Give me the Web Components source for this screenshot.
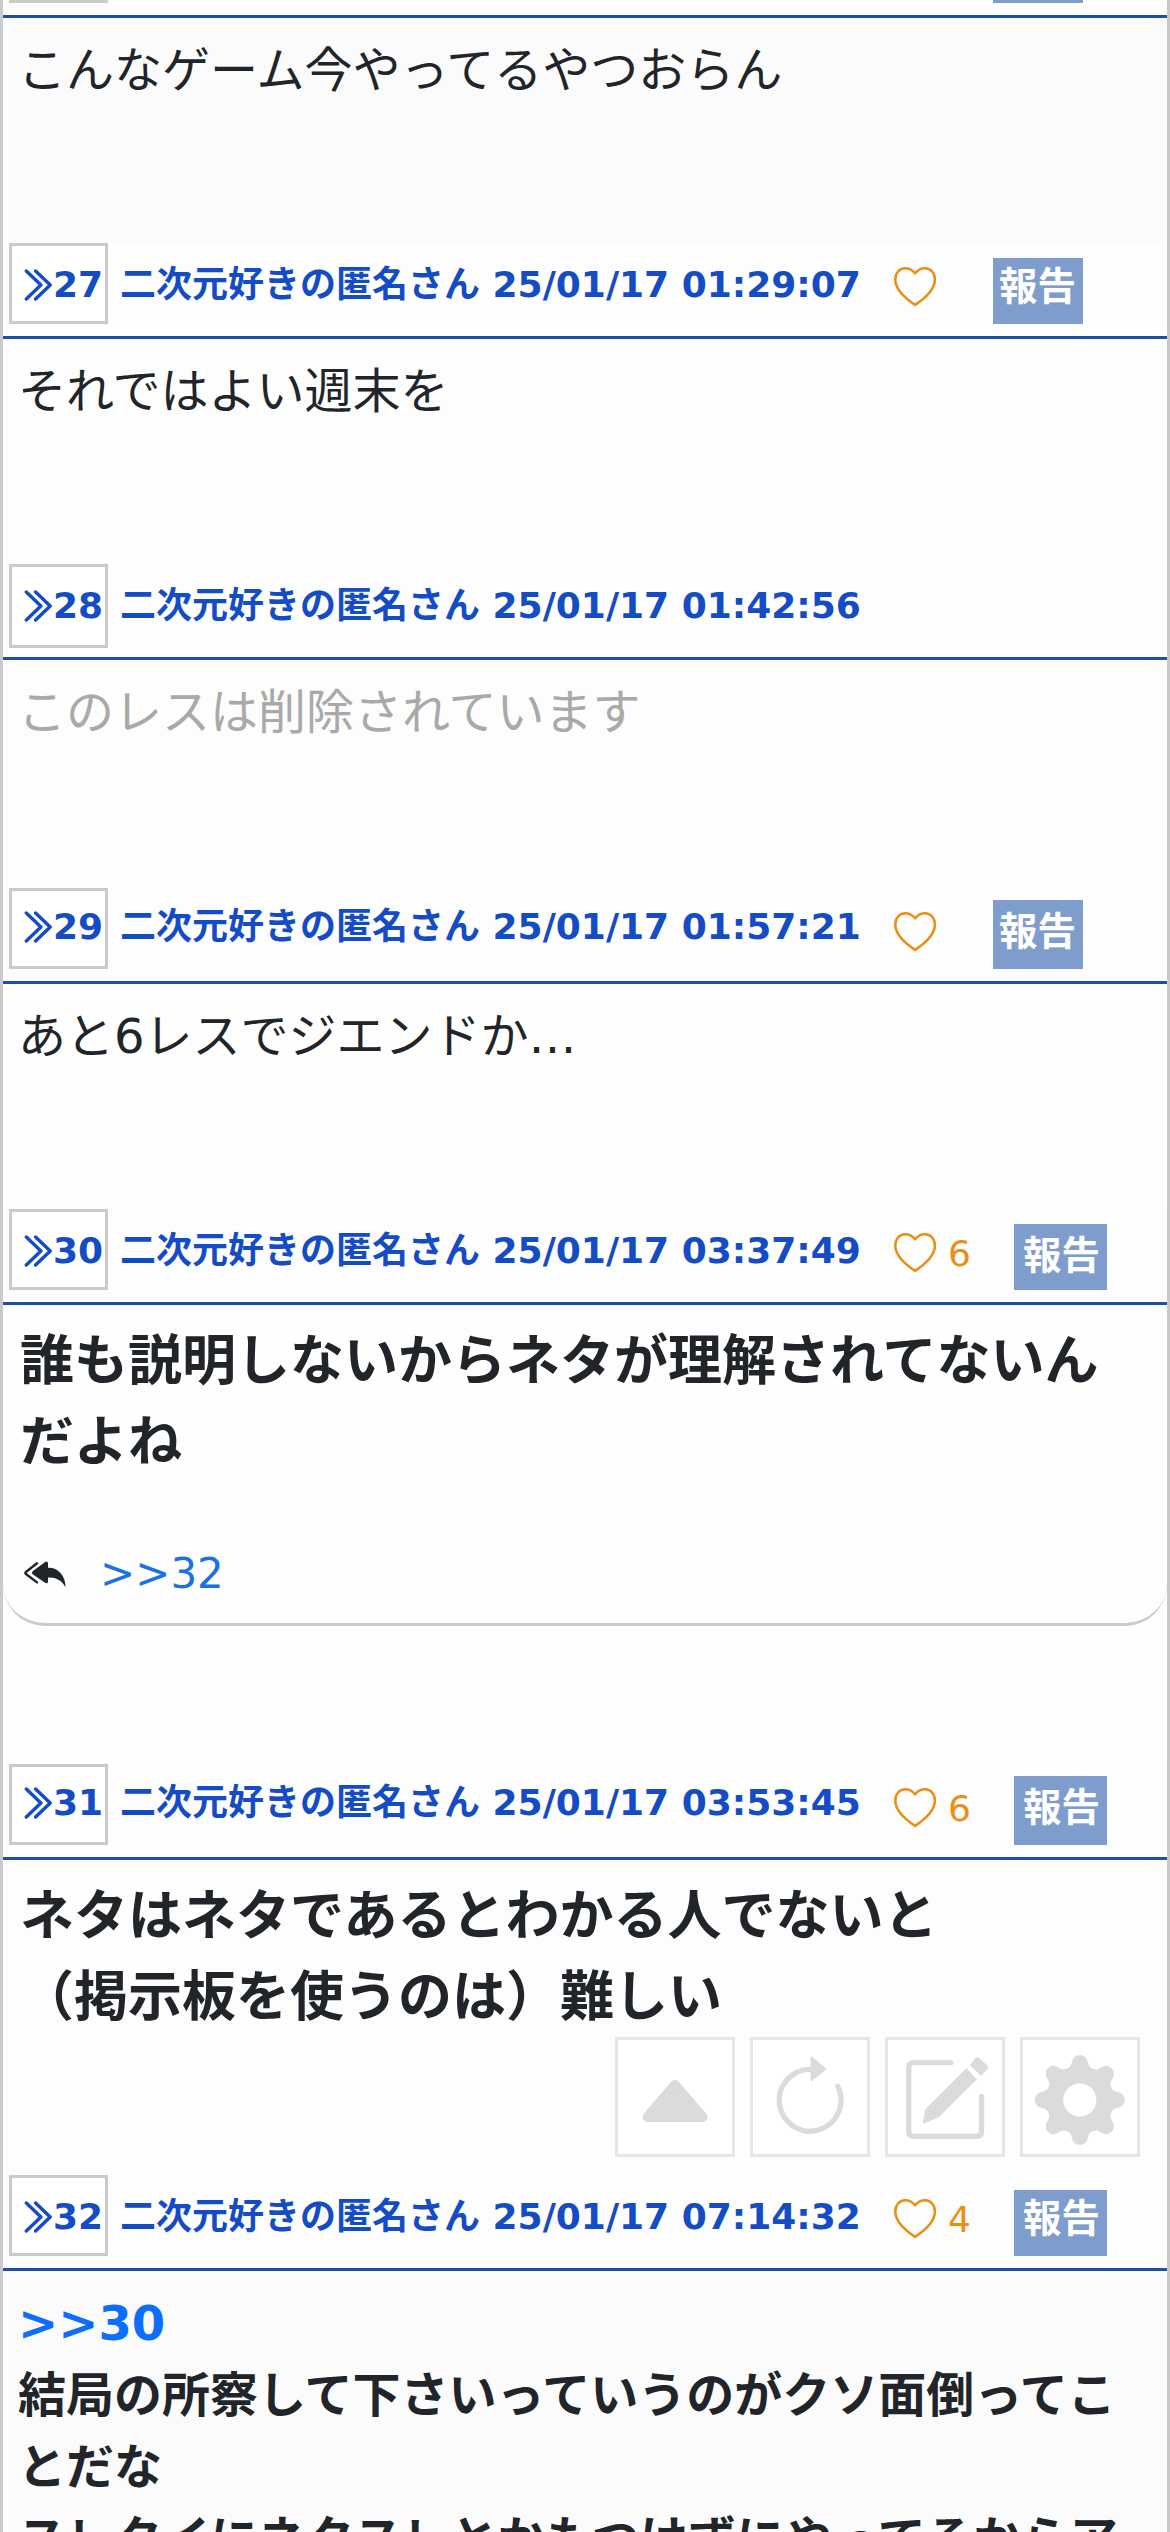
<!DOCTYPE html>
<html lang="ja">
<head>
<meta charset="utf-8">
<title>Thread</title>
<style>
html, body { margin: 0; }
body { height: 2532px; overflow: hidden; background: #fdfdfd; color: #212529; font-family: "DejaVu Sans", "Noto Sans CJK JP", sans-serif; }
</style>
</head>
<body>
<thread-view>
  <thread-post no="" likes="" report="narrow" bodyh="225" cut style="--bg:#fbfbfc">こんなゲーム今やってるやつおらん</thread-post>
  <thread-post no="27" time="25/01/17 01:29:07" report="narrow" bodyh="225">それではよい週末を</thread-post>
  <thread-post no="28" time="25/01/17 01:42:56" tallbox bodyh="228" deleted>このレスは削除されています</thread-post>
  <thread-post no="29" time="25/01/17 01:57:21" report="narrow" raised bodyh="225" style="--bg:#fefefe">あと6レスでジエンドか…</thread-post>
  <thread-post no="30" time="25/01/17 03:37:49" likes="6" report="wide" bodyh="459" big style="--bg:#fefefe">誰も説明しないからネタが理解されてないんだよね<reply-links slot="replies">&gt;&gt;32</reply-links></thread-post>
  <thread-post no="31" time="25/01/17 03:53:45" likes="6" report="wide" raised bodyh="315" big>ネタはネタであるとわかる人でないと<br>（掲示板を使うのは）難しい</thread-post>
  <thread-post no="32" time="25/01/17 07:14:32" likes="4" report="wide" bodyh="261" strong style="--bg:#fbfbfb"><a>&gt;&gt;30</a><br>結局の所察して下さいっていうのがクソ面倒ってことだな<br>スレタイにネタスレとかもつけずにやってるからア</thread-post>
</thread-view>
<tool-dock></tool-dock>
<script>
class ThreadView extends HTMLElement {
  constructor() {
    super();
    this.attachShadow({ mode: 'open' }).innerHTML = `
      <style>
        :host { display: block; box-sizing: border-box; width: 1170px; height: 2532px; overflow: hidden;
          border-left: 3px solid #cbcacc; border-right: 3px solid #c8c8c8; }
      </style><slot></slot>`;
  }
}

class PostNumber extends HTMLElement {
  constructor() {
    super();
    this.attachShadow({ mode: 'open' }).innerHTML = `
      <style>
        :host { display: flex; box-sizing: border-box; flex: none; width: 99px; height: 81px; border: 3px solid #cacaca;
          background: #fff; padding: var(--pt, 12px) 0 0 12px; line-height: 54px; align-items: flex-start; }
        svg { flex: none; width: 29px; height: 36px; margin-top: 9px; }
      </style>
      <svg viewBox="0 0 29 36" fill="none" stroke="currentColor" stroke-width="3.4" stroke-linecap="round" stroke-linejoin="round"><path d="M2.3 4l14.6 14L2.3 32M11.6 4l14.6 14L11.6 32"/></svg><slot></slot>`;
  }
}

class LikeButton extends HTMLElement {
  connectedCallback() {
    this.attachShadow({ mode: 'open' }).innerHTML = `
      <style>
        :host { display: flex; flex: none; color: #ea8e14; font-weight: 400; line-height: 54px; }
        svg { width: 48px; height: 48px; margin-top: 21px; }
        span { padding: 17.5px 0 0 9px; }
      </style>
      <svg viewBox="0 0 48 48" fill="none" stroke="currentColor" stroke-width="2.5" stroke-linejoin="miter"><path d="M24.1 9.2C21 5.8 17.8 4.3 14.2 4.3C8.3 4.3 4.3 9.2 4.3 15.6C4.3 24.5 13.5 34 24.1 40.9C34.7 34 43.9 24.5 43.9 15.6C43.9 9.2 39.9 4.3 34 4.3C30.4 4.3 27.2 5.8 24.1 9.2Z"/></svg><span></span>`;
    this.shadowRoot.querySelector('span').textContent = this.getAttribute('count') || '';
  }
}

class ReportButton extends HTMLElement {
  constructor() {
    super();
    this.attachShadow({ mode: 'open' }).innerHTML = `
      <style>
        :host { display: block; flex: none; box-sizing: border-box; width: 90px; height: 66px; margin-top: 15px; padding: 2px 0 0 6px;
          background: #7f9dcc; color: #fff; font-size: 38.5px; line-height: 54px; font-weight: 700; white-space: nowrap; }
      </style><slot></slot>`;
  }
}

class ReplyLinks extends HTMLElement {
  constructor() {
    super();
    this.attachShadow({ mode: 'open' }).innerHTML = `
      <style>
        :host { display: flex; box-sizing: border-box; height: 96px; border-bottom: 3px solid #cacaca; border-radius: 0 0 42px 42px;
          padding: 12px 0 0 20px; font-size: 42px; line-height: 63px; font-weight: 400; color: #1c70e6; }
        svg { width: 46px; height: 30px; margin: 17px 31px 0 0; color: #212529; }
      </style>
      <svg viewBox="0 0 46 30"><path fill="none" stroke="currentColor" stroke-width="2.4" stroke-linecap="round" stroke-linejoin="round" d="M14 4.2L2.6 13.2Q2 14 2.6 14.8L14 23.4"/><path fill="currentColor" d="M22.2 3Q24.8 1.6 25 4.4V8.8C34 8.2 42.4 15.5 42.6 28.2C38.8 21.5 33 18.2 25 18.6V22.5Q24.8 25.4 22.2 23.8L9.6 15.2Q8.2 13.7 9.6 12.2Z"/></svg><slot></slot>`;
  }
}

class ThreadPost extends HTMLElement {
  connectedCallback() {
    const a = n => this.getAttribute(n), h = n => this.hasAttribute(n);
    const raised = h('raised') ? 3 : 0;
    const wide = a('report') === 'wide';
    // the badge label sits 3px lower in posts 29, 30 and 31
    const low = raised || a('no') === '30';
    const big = h('big'), strong = h('strong');
    this.attachShadow({ mode: 'open' }).innerHTML = `
      <style>
        :host { display: block; }
        header { display: flex; align-items: flex-start; box-sizing: border-box; height: 96px; padding-left: 6px;
          border-bottom: 3px solid #1c4fa6; color: #134cc4; font-size: 36px; font-weight: 700; background: #fdfdfe; }
        header.cut { margin-top: -78px; }
        post-number { --pt: ${12 - raised}px; ${h('tallbox') ? 'height:84px;' : ''} }
        .who { flex: none; width: 783px; box-sizing: border-box; padding: ${15 - raised}px 0 0 12px; line-height: 54px; white-space: pre; }
        like-button { width: ${wide ? 123 : 102}px; }
        report-button { width: ${wide ? 93 : 90}px; height: ${66 + raised}px; margin-top: ${15 - raised}px; padding: ${low ? 5 : 2}px 0 0 ${wide ? 9 : 6}px; }
        section { display: flex; flex-direction: column; box-sizing: border-box; height: ${a('bodyh')}px; background: var(--bg, #fdfdfd); }
        .text { padding: 16px 15px 0 ${big ? 17 : 15}px; font-size: ${big ? 54 : 48}px; line-height: ${big ? 81 : 72}px;
          font-weight: ${big || strong ? 700 : 400}; color: ${h('deleted') ? '#a9a9a9' : '#212529'}; }
        .text.big { padding-right: 40px; }
        ::slotted(a) { color: #0d6efd; }
        ::slotted(reply-links) { margin-top: 47px; }
      </style>
      <header class="${h('cut') ? 'cut' : ''}">
        <post-number>${a('no')}</post-number>
        <span class="who">${a('time') ? '二次元好きの匿名さん ' + a('time') : ''}</span>
        ${a('report') ? `${h('cut') ? '<like-button style="visibility:hidden"></like-button>' : `<like-button count="${a('likes') || ''}"></like-button>`}<report-button>${h('cut') ? '' : '報告'}</report-button>` : ''}
      </header>
      <section><div class="text ${big ? 'big' : ''}"><slot></slot></div><slot name="replies"></slot></section>`;
  }
}

class ToolDock extends HTMLElement {
  constructor() {
    super();
    // gear outline: eight round teeth joined by tangent concave arcs
    const cx = 59.8, cy = 63, R = 37, r = 8, V = 42.2;
    const pt = (d, t) => [cx + d * Math.sin(t), cy - d * Math.cos(t)];
    let gear = '';
    for (let i = 0; i < 8; i++) {
      const t = i * Math.PI / 4, c = pt(R, t);
      const touch = s => {
        const v = pt(V, t + s * Math.PI / 8), dx = v[0] - c[0], dy = v[1] - c[1], l = Math.hypot(dx, dy);
        return (c[0] + dx / l * r).toFixed(2) + ' ' + (c[1] + dy / l * r).toFixed(2);
      };
      gear += (i ? 'A8.2 8.2 0 0 0 ' : 'M') + touch(-1) + `A${r} ${r} 0 0 1 ` + touch(1);
      if (i === 7) gear += 'A8.2 8.2 0 0 0 ' + gear.slice(1, gear.indexOf('A')) + 'Z';
    }
    gear += `M${cx - 16.6} ${cy}a16.6 16.6 0 1 0 33.2 0a16.6 16.6 0 1 0 -33.2 0Z`;
    const icons = [
      '<path fill="currentColor" stroke="currentColor" stroke-width="10" stroke-linejoin="round" d="M60 48L87.5 80H32.5Z"/>',
      '<path fill="none" stroke="currentColor" stroke-width="5.3" stroke-linecap="round" d="M60.5 32.3A30.9 30.9 0 1 0 87.8 49.4"/><path fill="currentColor" d="M60.5 20.5Q60.5 18.5 62 19.7L75.6 31Q76.8 32 75.6 33L62 44Q60.5 45.2 60.5 43.2Z"/>',
      '<path fill="none" stroke="currentColor" stroke-width="5.3" stroke-linecap="round" d="M65.8 25.7H28.7Q23.7 25.7 23.7 30.7V94.3Q23.7 99.3 28.7 99.3H91.5Q96.5 99.3 96.5 94.3V59.7"/><path fill="currentColor" d="M81.4 31L91.9 42.3L54.5 79.6Q53.6 80.5 52 81.1L39 86.4Q37.6 86.9 37.9 85.4L40 74Q40.2 72.6 41.2 71.6ZM84.8 28.2L90.4 21.2Q92.5 19.2 94.6 21.2L102.2 28.6Q103.8 30.6 102.2 32.6L96 38.9Z"/>',
      `<path fill="currentColor" fill-rule="evenodd" d="${gear}"/>`
    ];
    this.attachShadow({ mode: 'open' }).innerHTML = `
      <style>
        :host { position: absolute; left: 615px; top: 2037px; display: flex; gap: 15px; color: #dbdbdb; }
        button { all: unset; box-sizing: border-box; width: 120px; height: 120px; border: 3px solid #e6e6e6; background: #fff; overflow: hidden; }
        svg { display: block; width: 120px; height: 120px; margin: -3px; }
      </style>` + icons.map(i => `<button><svg viewBox="0 0 120 120">${i}</svg></button>`).join('');
  }
}

customElements.define('post-number', PostNumber);
customElements.define('like-button', LikeButton);
customElements.define('report-button', ReportButton);
customElements.define('reply-links', ReplyLinks);
customElements.define('thread-post', ThreadPost);
customElements.define('thread-view', ThreadView);
customElements.define('tool-dock', ToolDock);
</script>
</body>
</html>
